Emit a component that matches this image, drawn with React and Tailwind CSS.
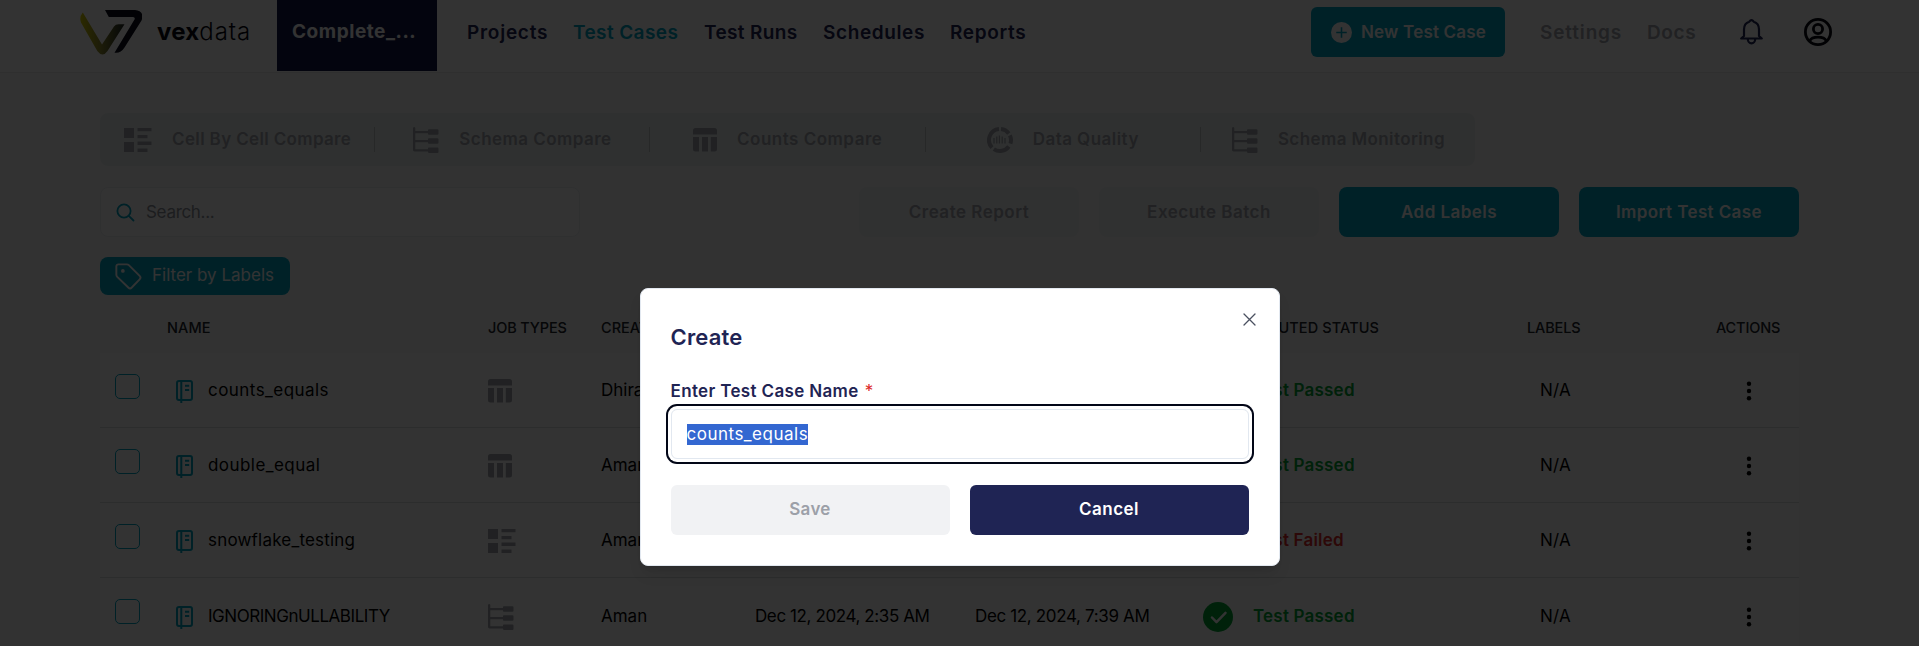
import React from 'react';

const NAV = [
  ['Projects', 'w-[81px]', 'text-[#1f2454] tracking-[0.74px]'],
  ['Test Cases', 'w-[106px]', 'text-[#00a5c4] tracking-[0.4px]'],
  ['Test Runs', 'w-[94px]', 'text-[#1f2454] tracking-[0.35px]'],
  ['Schedules', 'w-[102px]', 'text-[#1f2454] tracking-[0.62px]'],
  ['Reports', 'w-[77px]', 'text-[#1f2454] tracking-[0.65px]'],
];

function CellIcon({ className }) {
  return (
    <svg className={className} width="28" height="24" viewBox="0 0 28 24" fill="currentColor">
      <path d="M0 0h10v10H0zM0 14h10v10H0zM13.500 0h14v3.200h-14zM13.500 7h10v3.200h-10zM13.500 13.500h14v3.500h-14zM13.500 20.500h10V24h-10z" />
    </svg>
  );
}

function SchemaIcon({ className }) {
  return (
    <svg className={className} width="26" height="26" viewBox="0 0 26 26" fill="currentColor">
      <path d="M0 .8Q1.200-.6 2.300.8V4h12.700V3q0-.8.800-.8h8.700q1 0 1 1v3.600q0 .9-1 .9h-8.700q-.8 0-.8-.8V6.200H2.300v6.700H15V12q0-.8.800-.8h8.700q1 0 1 1v3.600q0 .9-1 .9h-8.700q-.8 0-.8-.8v-.7H2.300v7H15v-1q0-.8.800-.8h8.700q1 0 1 1v3.600q0 .9-1 .9h-8.700q-.8 0-.8-.8v-.7H1.500Q0 24.400 0 23z" />
    </svg>
  );
}

function CountsIcon({ className }) {
  return (
    <svg className={className} width="24" height="24" viewBox="0 0 24 24" fill="currentColor">
      <path d="M0 6.500V2.500Q0 0 2.500 0h19Q24 0 24 2.500v4zM0 9h6v14.500H2.500Q0 23.500 0 21zM9 9h6v14.500H9zM17.800 9H24v12q0 2.500-2.500 2.500h-3.700z" />
    </svg>
  );
}

function QualityIcon({ className }) {
  return (
    <svg className={className} width="26" height="26" viewBox="0 0 26 26" fill="none" stroke="currentColor">
      <path strokeWidth="4" d="M14 2.100A11 11 0 0 1 21.800 6.500M22.900 8.300A11 11 0 0 1 23.400 16.600M21.800 19.500A11 11 0 0 1 6.800 22.100M5 20.600A11 11 0 0 1 12 2.100" />
      <path strokeWidth="1.300" d="M7 11v5.500M9.800 9.500v7M12.400 8.500v8M15.200 9.500v7M18 11v5.500" />
    </svg>
  );
}

const TYPES = [
  [CellIcon, 'Cell By Cell Compare', 'w-[178px] tracking-[0.35px]'],
  [SchemaIcon, 'Schema Compare', 'w-[152px] tracking-[0.45px]'],
  [CountsIcon, 'Counts Compare', 'w-[145px] tracking-[0.5px]'],
  [QualityIcon, 'Data Quality', 'w-[106px] tracking-[0.45px]'],
  [SchemaIcon, 'Schema Monitoring', 'w-[166px] tracking-[0.4px]'],
];

const ROWS = [
  { name: 'counts_equals', track: 'tracking-[0.45px]', Icon: CountsIcon, by: 'Dhiraj', made: 'Dec 12, 2024, 9:12 AM', ran: 'Dec 12, 2024, 9:14 AM', ok: true },
  { name: 'double_equal', track: 'tracking-[0.45px]', Icon: CountsIcon, by: 'Aman', made: 'Dec 12, 2024, 8:20 AM', ran: 'Dec 12, 2024, 8:22 AM', ok: true },
  { name: 'snowflake_testing', track: 'tracking-[0.2px]', Icon: CellIcon, by: 'Aman', made: 'Dec 12, 2024, 7:45 AM', ran: 'Dec 12, 2024, 7:46 AM', ok: false },
  { name: 'IGNORINGnULLABILITY', track: 'tracking-[-0.45px]', Icon: SchemaIcon, by: 'Aman', made: 'Dec 12, 2024, 2:35 AM', ran: 'Dec 12, 2024, 7:39 AM', ok: true },
];

function Logo() {
  return (
    <svg className="shrink-0" width="62" height="45" viewBox="0 0 62 45" fill="none">
      <defs>
        <linearGradient id="vee" x1="0" y1="0" x2="46" y2="0" gradientUnits="userSpaceOnUse">
          <stop offset="0" stopColor="#d9cf00" />
          <stop offset="0.45" stopColor="#8f8b30" />
          <stop offset="0.95" stopColor="#222a26" />
        </linearGradient>
      </defs>
      <path fill="url(#vee)" d="M2.800 2.500 22 34.500 34 16.500Q35.500 14.300 38.500 14.300H44.500L27.500 41Q22.600 48 17.300 41L1 12.500Q-1 7 2.800 2.500Z" />
      <path fill="#0b0d1c" d="M25 0H55Q65 1.200 61.500 10.500L44.500 37.500Q40.500 43.700 34.500 42.700L54.800 9Q55 7 53 7H28.800Z" />
    </svg>
  );
}

function Header() {
  return (
    <header className="flex h-[73px] items-start border-b border-[#ececec] bg-white pl-[80px]">
      <div className="flex w-[197px] items-start pt-[10px]">
        <Logo />
        <div className="ml-[15px] mt-[4px] whitespace-nowrap text-[24px] leading-[36px] text-[#05070f]">
          <span className="font-bold tracking-[0.2px]">vex</span>
          <span className="font-light tracking-[0.9px]">data</span>
        </div>
      </div>
      <div className="flex h-[71px] w-[160px] items-start bg-[#101848] pl-[15px] pt-[17px] text-[19px] font-bold leading-[30px] tracking-[0.55px] text-white">
        Complete_...
      </div>
      <nav className="ml-[30px] mt-[18px] flex gap-[25px] whitespace-nowrap text-[19px] font-semibold leading-[30px]">
        {NAV.map(([label, w, look]) => (
          <a key={label} className={w + ' ' + look}>{label}</a>
        ))}
      </nav>
      <button className="ml-[284px] mt-[7px] flex h-[50px] w-[194px] items-center rounded-md bg-[#00a5c4] pl-[20px] pt-px text-[17px] font-semibold tracking-[0.2px] text-white">
        <svg className="mr-[9px] shrink-0" width="21" height="21" viewBox="0 0 20 20">
          <circle cx="10" cy="10" r="10" fill="#fff" />
          <path d="M10 5v10M5 10h10" stroke="#00a5c4" strokeWidth="1.500" />
        </svg>
        New Test Case
      </button>
      <div className="ml-[35px] mt-[18px] flex whitespace-nowrap text-[19px] font-semibold leading-[30px] text-[#a3a7ae]">
        <a className="w-[107px] tracking-[0.85px]">Settings</a>
        <a className="w-[93px] tracking-[0.6px]">Docs</a>
      </div>
      <svg className="mt-[19px] shrink-0" width="23" height="26" viewBox="0 0 23 26" fill="none" stroke="#1f2454" strokeWidth="2.200" strokeLinejoin="round" strokeLinecap="round">
        <path d="M1.200 19.500H21.800L19 17V10.500C19 6.500 16.800 3.600 13.700 2.700Q11.500-.3 9.300 2.700C6.200 3.600 4 6.500 4 10.500V17Z" />
        <path d="M7.800 20a3.700 4.300 0 0 0 7.400 0" />
      </svg>
      <svg className="ml-[41px] mt-[18px] shrink-0" width="28" height="28" viewBox="0 0 28 28" fill="none" stroke="#05070f" strokeWidth="2.800">
        <circle cx="14" cy="14" r="12.600" />
        <circle cx="14" cy="11" r="4.600" />
        <path d="M5.800 22.800Q7.500 19.200 14 19.200T22.200 22.800" />
      </svg>
    </header>
  );
}

function Toolbar() {
  const btn = 'flex h-[50px] w-[220px] items-center justify-center rounded-lg pt-[2px] text-[17px] font-semibold ';
  return (
    <div className="mt-[21px] flex w-[1699px] gap-5">
      <div className="mr-auto flex h-[50px] w-[480px] items-center rounded-lg border border-[#eceef1] bg-white pl-[15px]">
        <svg width="19" height="19" viewBox="0 0 19 19" fill="none" stroke="#00a5c4" strokeWidth="1.800" strokeLinecap="round">
          <circle cx="8" cy="8" r="6.600" />
          <path d="m12.800 12.800 4.700 4.700" />
        </svg>
        <span className="ml-[11px] pt-px text-[17px] tracking-[-0.3px] text-[#8d929a]">Search...</span>
      </div>
      <button className={btn + 'bg-[#f1f2f4] tracking-[0.5px] text-[#a3a7ae]'}>Create Report</button>
      <button className={btn + 'bg-[#f1f2f4] tracking-[0.5px] text-[#a3a7ae]'}>Execute Batch</button>
      <button className={btn + 'bg-[#00a5c4] tracking-[0.45px] text-white'}>Add Labels</button>
      <button className={btn + 'bg-[#00a5c4] tracking-[0.4px] text-white'}>Import Test Case</button>
    </div>
  );
}

const COLS = 'grid grid-cols-[67px_321px_113px_154px_220px_228px_280px_316px]';

function Row({ row, last }) {
  const Icon = row.Icon;
  return (
    <div className={COLS + ' h-[75px] items-center whitespace-nowrap bg-white pt-[2px] text-[17px] text-black' + (last ? '' : ' border-b border-[#dddfe2]')}>
      <span className="mb-[10px] ml-[15px] size-[25px] rounded-[5px] border border-[#00a5c4]" />
      <span className="flex items-center pl-[9px]">
        <svg className="mt-px shrink-0" width="17" height="23" viewBox="0 0 17 23" fill="none" stroke="#00a5c4" strokeWidth="2">
          <rect x="1" y="1" width="15" height="19" rx="2" />
          <path d="M5.300 1v22M9 5.800h4.200M9 10h4.200" />
        </svg>
        <span className={'ml-[15px] ' + row.track}>{row.name}</span>
      </span>
      <Icon className="text-[#a3a7ae]" />
      <span>{row.by}</span>
      <span className="tracking-[-0.4px]">{row.made}</span>
      <span className="tracking-[-0.35px]">{row.ran}</span>
      <span className={'flex items-center gap-[20px] font-semibold tracking-[0.2px] ' + (row.ok ? 'text-[#00a535]' : 'text-[#e02b2b]')}>
        <svg className="shrink-0" width="30" height="30" viewBox="0 0 30 30" fill="none">
          <circle cx="15" cy="15" r="15" fill="currentColor" />
          <path d="m9 15.500 4.500 4.700 9-9.400" stroke="#fff" strokeWidth="2.500" strokeLinecap="round" strokeLinejoin="round" />
        </svg>
        {row.ok ? 'Test Passed' : 'Test Failed'}
      </span>
      <span className="flex items-center pl-[57px] tracking-[0.2px]">
        <span className="w-[206px]">N/A</span>
        <svg width="6" height="20" viewBox="0 0 6 20" fill="#000">
          <circle cx="3" cy="2.700" r="2.200" />
          <circle cx="3" cy="10" r="2.200" />
          <circle cx="3" cy="17.300" r="2.200" />
        </svg>
      </span>
    </div>
  );
}

function Dialog() {
  return (
    <div className="absolute inset-0 flex items-start justify-center bg-black/80 pt-[288px]">
      <div className="relative h-[278px] w-[640px] rounded-lg border border-[#e2e8f0] bg-white px-[30px] shadow-lg">
        <svg className="absolute right-[23px] top-[24px]" width="13" height="13" viewBox="0 0 13 13" stroke="#4a5060" strokeWidth="1.300" strokeLinecap="round">
          <path d="m1 1 11 11M12 1 1 12" />
        </svg>
        <h2 className="mt-[32px] text-[22px] font-semibold leading-[32px] tracking-[0.2px] text-[#1f2454]">Create</h2>
        <label className="mt-[26px] flex whitespace-nowrap text-[17px] font-semibold leading-[24px] tracking-[0.35px] text-[#1f2454]">
          Enter Test Case Name<span className="ml-[6px] font-normal text-[#dc2626]">*</span>
        </label>
        <div className="mt-[6px] flex h-[50px] items-center rounded-md border border-[#e2e8f0] bg-white pl-[15px] pt-px shadow-[0_0_0_3px_#fff,0_0_0_5px_#020617]">
          <span className="h-[21px] bg-[#3367d1] text-[17px] leading-[21px] tracking-[0.5px] text-white">counts_equals</span>
        </div>
        <div className="mt-[26px] grid grid-cols-2 gap-5 text-[17px] font-semibold">
          <button className="h-[50px] rounded-md bg-[#f1f2f4] tracking-[0.3px] text-[#9ca0a8]">Save</button>
          <button className="h-[50px] rounded-md bg-[#1f2454] tracking-[0.45px] text-white">Cancel</button>
        </div>
      </div>
    </div>
  );
}

export default function App() {
  return (
    <div className="relative h-[646px] w-full overflow-hidden bg-[#fbfbfb] font-['Inter',sans-serif]">
      <Header />
      <main className="flex flex-col items-start pl-[100px] pt-[40px]">
        <div className="flex h-[53px] w-[1375px] items-center rounded-lg bg-[#ebf1f0] text-[17px] font-semibold text-[#a3a7ae]">
          {TYPES.map(([Icon, label, look], i) => (
            <div key={label} className={'flex h-[25px] flex-1 items-center justify-center gap-5 whitespace-nowrap ' + (i < 4 ? 'border-r border-[#c3c8c9]' : '')}>
              <Icon className="shrink-0" />
              <span className={look}>{label}</span>
            </div>
          ))}
        </div>
        <Toolbar />
        <button className="mt-5 flex h-[38px] w-[190px] items-center rounded-lg bg-[#00a5c4] pl-[15px] text-[17px] text-white">
          <svg className="shrink-0" width="27" height="27" viewBox="0 0 24 24" fill="none" stroke="#fff" strokeWidth="1.700" strokeLinejoin="round">
            <path d="M3 1.200H10.500a2.500 2.500 0 0 1 1.800.7l9.600 9.500a2.200 2.200 0 0 1 0 3.100l-7 7.300a2.200 2.200 0 0 1-3.100 0L2 12.300A2.500 2.500 0 0 1 1.200 10.500V3A1.800 1.800 0 0 1 3 1.200Z" />
            <circle cx="7" cy="7" r=".8" fill="#fff" />
          </svg>
          <span className="ml-[10px]">Filter by Labels</span>
        </button>
        <section className="w-[1699px]">
          <div className={COLS + ' h-[58px] items-center whitespace-nowrap pt-[7px] text-[14.500px] font-medium text-[#20242c]'}>
            <span />
            <span className="tracking-[0.1px]">NAME</span>
            <span className="tracking-[-0.15px]">JOB TYPES</span>
            <span>CREATED BY</span>
            <span>CREATED AT</span>
            <span>EXECUTED AT</span>
            <span className="w-[176px] text-right tracking-[0.1px]">EXECUTED STATUS</span>
            <span className="flex pl-[44px] tracking-[-0.15px]">
              <span className="w-[189px]">LABELS</span>ACTIONS
            </span>
          </div>
          {ROWS.map((row, i) => (
            <Row key={row.name} row={row} last={i === ROWS.length - 1} />
          ))}
        </section>
      </main>
      <Dialog />
    </div>
  );
}
